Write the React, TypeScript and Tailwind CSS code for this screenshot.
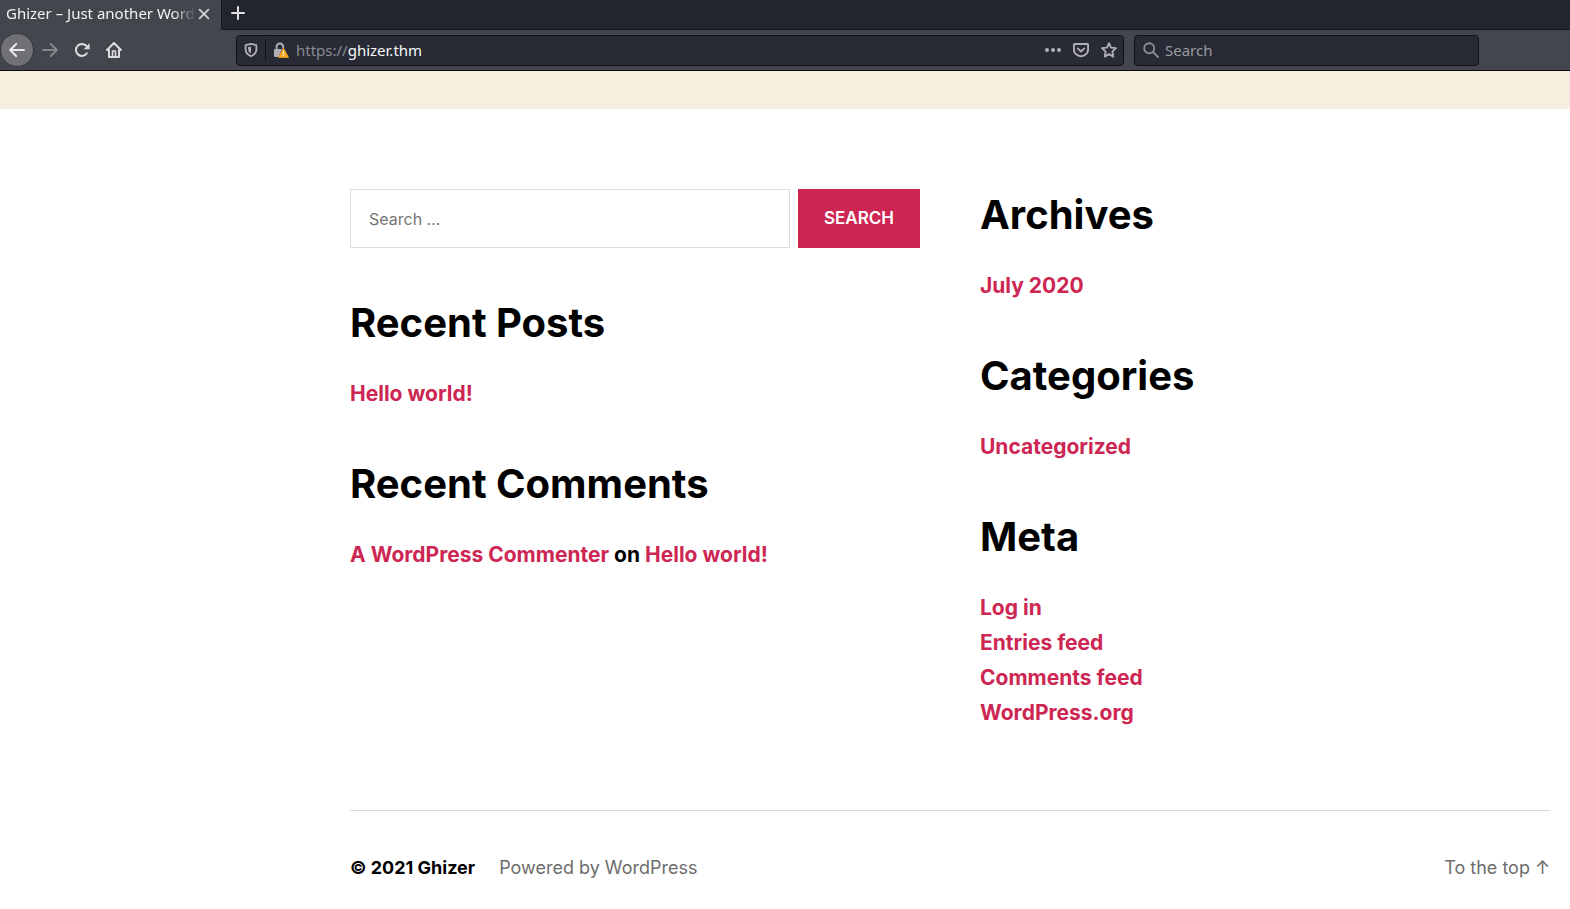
import type { ReactNode } from "react";

const chromeFont = "font-['Noto_Sans',sans-serif]";

type LinkItem = { label: string; href: string };

const archives: LinkItem[] = [{ label: "July 2020", href: "#july-2020" }];
const categories: LinkItem[] = [{ label: "Uncategorized", href: "#uncategorized" }];
const meta: LinkItem[] = [
  { label: "Log in", href: "#login" },
  { label: "Entries feed", href: "#entries-feed" },
  { label: "Comments feed", href: "#comments-feed" },
  { label: "WordPress.org", href: "#wordpress" },
];

function IconButton({ label, children, className = "" }: { label: string; children: ReactNode; className?: string }) {
  return (
    <button type="button" aria-label={label} className={`flex shrink-0 items-center justify-center ${className}`}>
      {children}
    </button>
  );
}

function TabBar() {
  return (
    <div className="flex h-[30px] bg-[#23252e]">
      <div className="flex w-[221px] shrink-0 items-center bg-[#43464d] pr-[9px] pl-[6px]">
        <span className="min-w-0 flex-1 overflow-hidden mask-r-from-88% pb-1 text-[15px] leading-[24px] whitespace-nowrap text-[#f2f2f3]">
          Ghizer – Just another WordPress
        </span>
        <IconButton label="Close tab" className="size-4 pb-[2px]">
          <svg viewBox="0 0 16 16" className="size-4" fill="none" stroke="#d6d6d8" strokeWidth="1.7" strokeLinecap="round">
            <path d="M3.6 3.6l8.8 8.8M12.4 3.6l-8.8 8.8" />
          </svg>
        </IconButton>
      </div>
      <div className="flex flex-1 items-center border-b border-l border-[#15161b] pl-[8px]">
        <IconButton label="New tab" className="size-4 pb-[3px]">
          <svg viewBox="0 0 16 16" className="size-4" fill="none" stroke="#e2e2e4" strokeWidth="2" strokeLinecap="round">
            <path d="M8 2v12M2 8h12" />
          </svg>
        </IconButton>
      </div>
    </div>
  );
}

function AddressBar() {
  return (
    <div className="flex h-[31px] min-w-0 flex-1 items-center rounded-[4px] border border-[#101116] bg-[#282a35] pr-[6px] pl-[6px]">
      <IconButton label="Tracking protection" className="size-4">
        <svg viewBox="0 0 16 16" className="size-4" fill="none" stroke="#b1b1b5" strokeWidth="1.8" strokeLinejoin="round">
          <path d="M8 1.9l5.4 1.2v4.2c0 3.3-2.2 5.6-5.4 7-3.2-1.4-5.4-3.7-5.4-7V3.1z" />
          <path d="M8 4.4l-2.800.5v2.600c0 1.800.9 3 2.800 4z" fill="#b1b1b5" stroke="none" />
        </svg>
      </IconButton>
      <span className="ml-[6px] h-[22px] w-px bg-[#101116]" />
      <IconButton label="Connection is not secure" className="ml-[7px] size-4">
        <svg viewBox="0 0 16 16" className="size-4">
          <path d="M3.6 8V4.800a3.300 3.300 0 0 1 6.600 0V6.500" fill="none" stroke="#b1b1b5" strokeWidth="1.9" />
          <path d="M2 7h7L5.500 15H2a1 1 0 0 1-1-1V8a1 1 0 0 1 1-1z" fill="#b1b1b5" />
          <path d="M10.500 6.300L15.300 15.300H5.700z" fill="#fdaa1c" stroke="#fdaa1c" strokeWidth="1" strokeLinejoin="round" />
          <path d="M10.500 8.800v3.200M10.500 13v1.200" stroke="#fff" strokeWidth="1.3" />
        </svg>
      </IconButton>
      <span className="ml-[7px] flex-1 text-[15px] leading-[24px] whitespace-nowrap text-[#8a8b91]">
        https://<span className="text-[#f9f9fa]">ghizer.thm</span>
      </span>
      <div className="flex items-center gap-3">
        <IconButton label="Page actions" className="size-4">
          <svg viewBox="0 0 16 16" className="size-4" fill="#b1b1b5">
            <circle cx="2" cy="8" r="2" />
            <circle cx="8" cy="8" r="2" />
            <circle cx="14" cy="8" r="2" />
          </svg>
        </IconButton>
        <IconButton label="Save to Pocket" className="size-4">
          <svg viewBox="0 0 16 16" className="size-4" fill="none" stroke="#b1b1b5" strokeWidth="1.9" strokeLinecap="round" strokeLinejoin="round">
            <path d="M1.900 2h12.200a1 1 0 0 1 1 1v4.200a7.100 7 0 0 1-14.200 0V3a1 1 0 0 1 1-1z" />
            <path d="M4.700 6.400L8 9.500l3.300-3.100" />
          </svg>
        </IconButton>
        <IconButton label="Bookmark this page" className="size-4">
          <svg viewBox="0 0 16 16" className="size-4" fill="none" stroke="#b1b1b5" strokeWidth="1.8" strokeLinejoin="round">
            <path d="M8 1.200l2 4.500 5 .5-3.700 3.400 1 5L8 12.100l-4.300 2.500 1-5L1 6.200l5-.5z" />
          </svg>
        </IconButton>
      </div>
    </div>
  );
}

function Toolbar() {
  return (
    <div className="flex h-[41px] items-center border-b border-[#0c0c10] bg-[#43464d] pr-[91px]">
      <div className="flex w-[236px] shrink-0 items-center">
        <IconButton label="Back" className="size-[34px] rounded-full border border-[#34363c] bg-[#6f7177]">
          <svg viewBox="0 0 16 16" className="size-4" fill="none" stroke="#e8e8ea" strokeWidth="2" strokeLinecap="round" strokeLinejoin="round">
            <path d="M15 8H1.500M7.200 2L1.200 8l6 6" />
          </svg>
        </IconButton>
        <IconButton label="Forward" className="ml-2 size-4">
          <svg viewBox="0 0 16 16" className="size-4" fill="none" stroke="#85878c" strokeWidth="2" strokeLinecap="round" strokeLinejoin="round">
            <path d="M1 8h13.500M8.800 2l6 6-6 6" />
          </svg>
        </IconButton>
        <IconButton label="Reload" className="ml-4 size-4">
          <svg viewBox="0 0 16 16" className="size-4" fill="none" stroke="#dededf" strokeWidth="2" strokeLinecap="round">
            <path d="M12.900 11.300A6 6 0 1 1 12.300 3.800" />
            <path d="M15.600 1.300V6.700a.5.5 0 0 1-.5.500H9.700z" fill="#dededf" stroke="none" />
          </svg>
        </IconButton>
        <IconButton label="Home" className="ml-4 size-4">
          <svg viewBox="0 0 16 16" className="size-4" fill="none" stroke="#dededf" strokeWidth="2" strokeLinecap="round" strokeLinejoin="round">
            <path d="M1 8l7-7 7 7M3 8v7h10V8" />
            <path d="M6.500 14.500V9h3v5.500" strokeWidth="1.600" />
          </svg>
        </IconButton>
      </div>
      <AddressBar />
      <label className="ml-[10px] flex h-[31px] w-[345px] shrink-0 items-center gap-[6px] rounded-[4px] border border-[#101116] bg-[#282a35] pl-2">
        <svg viewBox="0 0 16 16" className="size-4 shrink-0" fill="none" stroke="#8a8b91" strokeWidth="1.9" strokeLinecap="round">
          <circle cx="6.200" cy="6.200" r="5" />
          <path d="M10 10l5 5" />
        </svg>
        <input
          type="text"
          aria-label="Search the web"
          placeholder="Search"
          className="min-w-0 flex-1 bg-transparent text-[15px] leading-[24px] text-white outline-none placeholder:text-[#9a9ba0]"
        />
      </label>
    </div>
  );
}

function Widget({ title, children }: { title: string; children: ReactNode }) {
  return (
    <section>
      <h2 className="mb-[30px] text-[40px] leading-[52px] font-bold">{title}</h2>
      {children}
    </section>
  );
}

function LinkList({ items }: { items: LinkItem[] }) {
  return (
    <ul className="flex flex-col gap-[5px] text-[21px] leading-[30px] font-bold text-[#cd2653]">
      {items.map((item) => (
        <li key={item.label}>
          <a href={item.href}>{item.label}</a>
        </li>
      ))}
    </ul>
  );
}

export default function App() {
  return (
    <div className="flex min-h-screen flex-col bg-white">
      <header className={chromeFont}>
        <TabBar />
        <Toolbar />
      </header>
      <div className="h-[38px] bg-[#f5efe0]" />
      <div className="pr-5 pl-[350px] font-['Inter',sans-serif] text-black">
        <main className="grid grid-cols-2 gap-[60px] border-b border-[#dcd7ca] pt-20 pb-[82px]">
          <div className="flex flex-col gap-[49px]">
            <form className="flex gap-2" onSubmit={(e) => e.preventDefault()}>
              <input
                type="search"
                aria-label="Search for"
                placeholder="Search …"
                className="h-[59px] min-w-0 flex-1 border border-[#dcdcdc] px-[18px] text-[16px] outline-none placeholder:text-[#757575]"
              />
              <button type="submit" className="h-[59px] w-[122px] bg-[#cd2653] text-[17px] font-semibold text-white uppercase">
                Search
              </button>
            </form>
            <Widget title="Recent Posts">
              <LinkList items={[{ label: "Hello world!", href: "#hello-world" }]} />
            </Widget>
            <Widget title="Recent Comments">
              <p className="text-[21px] leading-[30px] font-bold">
                <a href="#commenter" className="text-[#cd2653]">A WordPress Commenter</a> on{" "}
                <a href="#hello-world" className="text-[#cd2653]">Hello world!</a>
              </p>
            </Widget>
          </div>
          <div className="flex flex-col gap-[49px]">
            <Widget title="Archives">
              <LinkList items={archives} />
            </Widget>
            <Widget title="Categories">
              <LinkList items={categories} />
            </Widget>
            <Widget title="Meta">
              <LinkList items={meta} />
            </Widget>
          </div>
        </main>
        <footer className="flex items-center gap-6 pt-[43px] pb-11 text-[18px] leading-[27px]">
          <p className="font-bold">© 2021 Ghizer</p>
          <a href="#powered-by" className="text-[#6d6d6d]">Powered by WordPress</a>
          <a href="#top" className="ml-auto text-[#6d6d6d]">To the top ↑</a>
        </footer>
      </div>
    </div>
  );
}
